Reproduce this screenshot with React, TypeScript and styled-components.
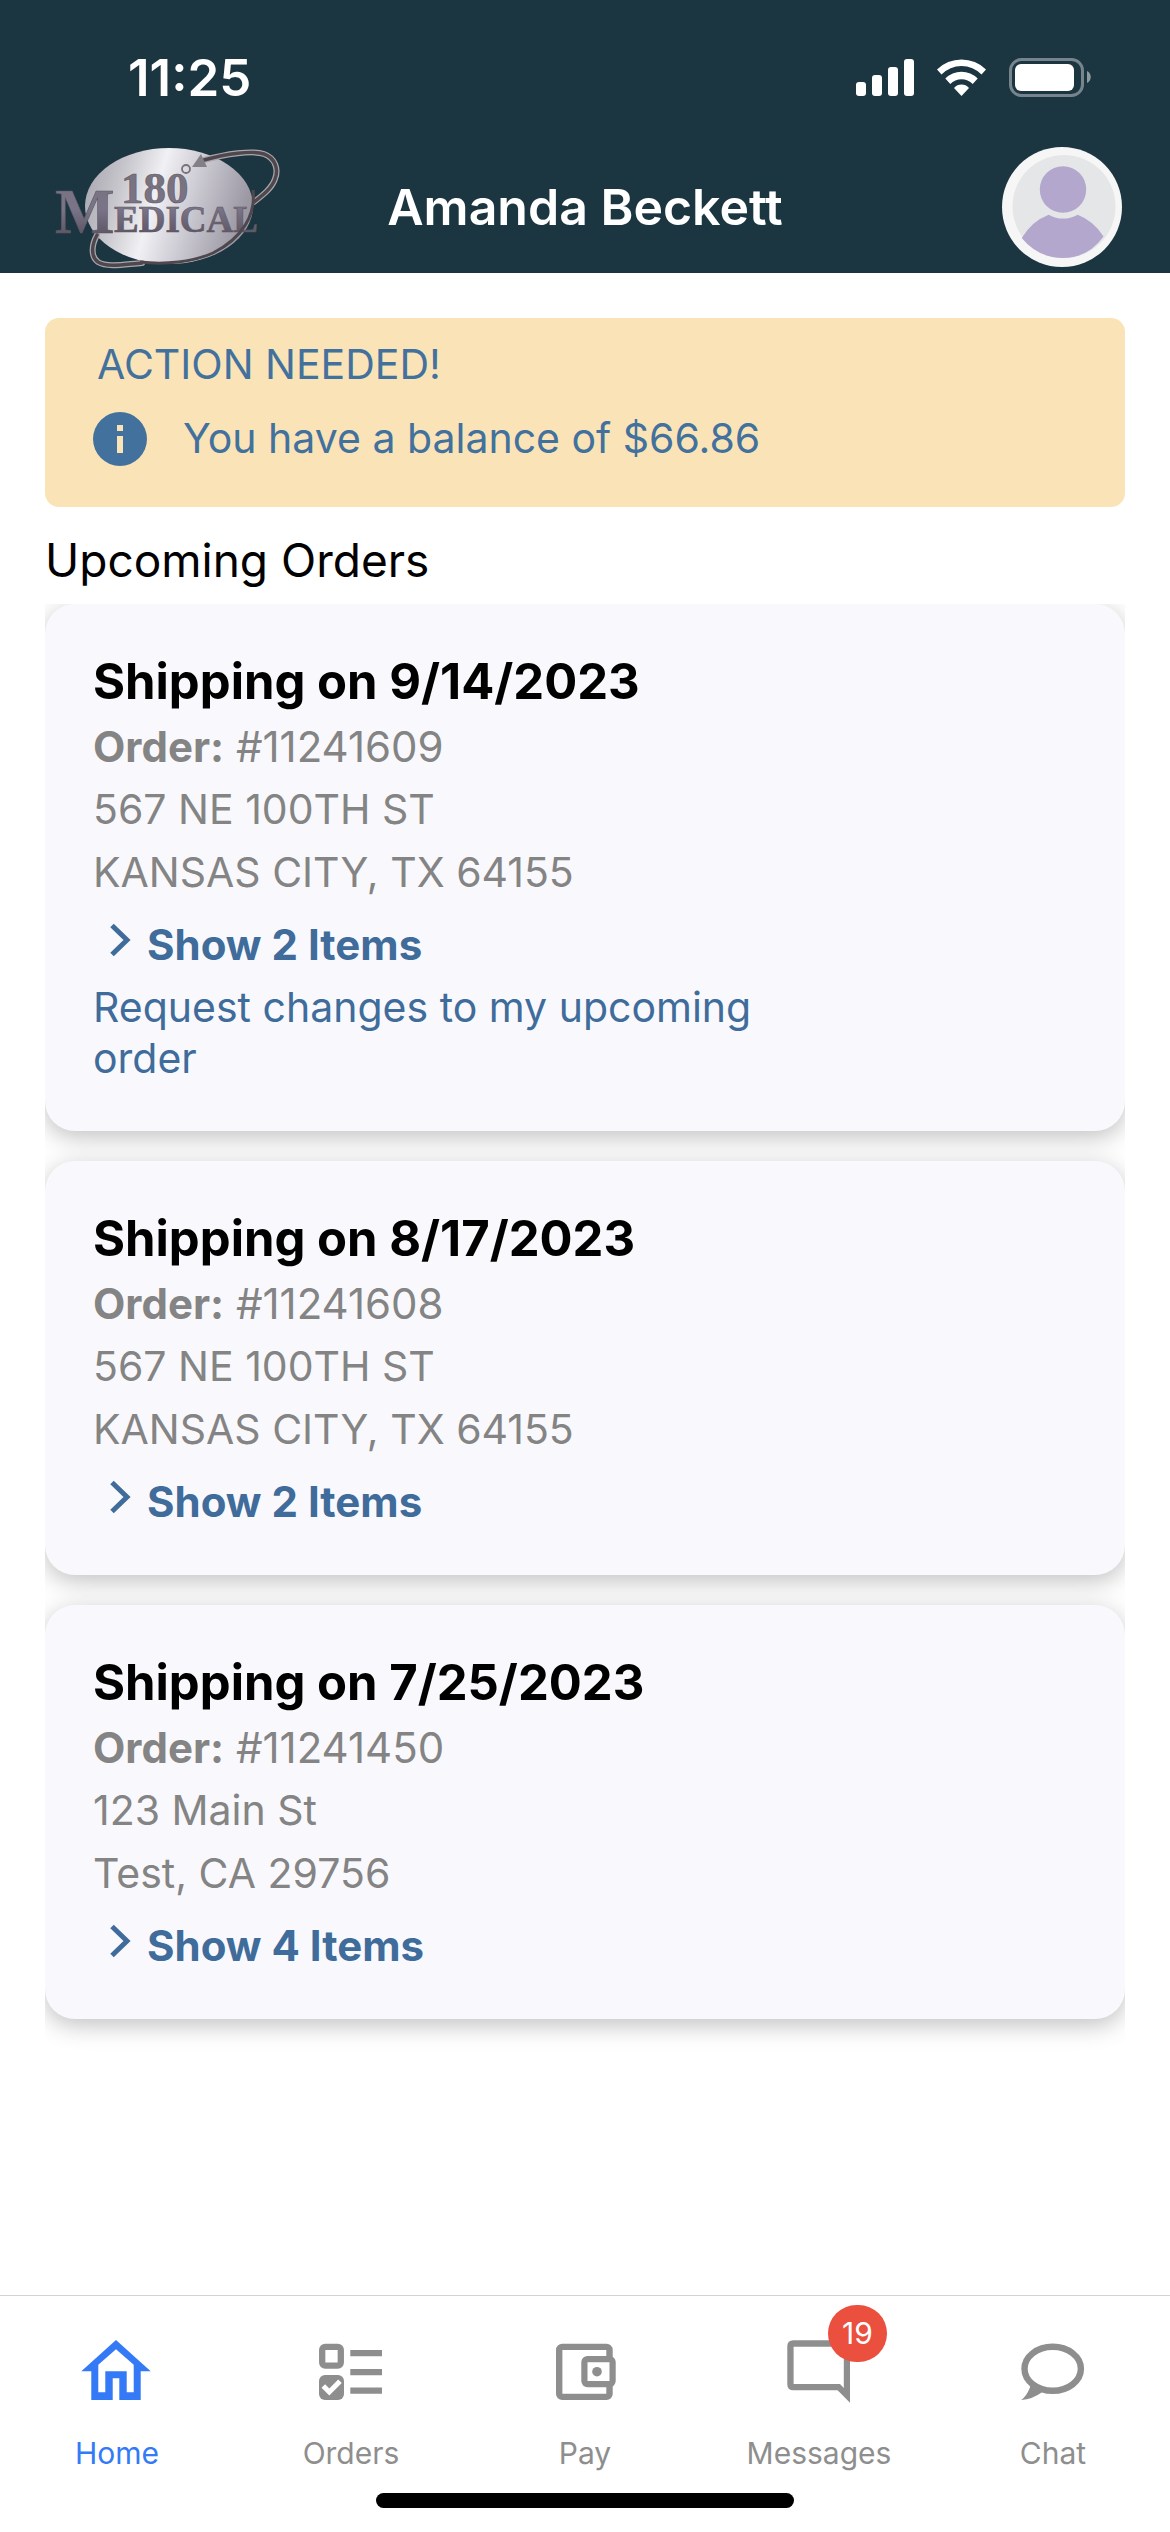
import React from "react";
import styled, { createGlobalStyle } from "styled-components";

const GlobalStyle = createGlobalStyle`
  * { box-sizing: border-box; }
  body { margin: 0; background: #fff; color: #000; font-family: Inter, "Liberation Sans", sans-serif; }
  h1, h2, h3, p { margin: 0; padding: 0; }
  button { border: 0; padding: 0; background: none; font: inherit; color: inherit; text-align: left; cursor: pointer; }
  a { color: inherit; text-decoration: none; }
`;

const Screen = styled.div`
  min-height: 100vh;
  display: flex;
  flex-direction: column;
`;

const Header = styled.header`
  background: #1b3541;
  color: #fff;
`;

const StatusBar = styled.div`
  display: flex;
  align-items: center;
  justify-content: space-between;
  padding: 50px 78px 38px 128px;
`;

const Clock = styled.span`
  font-size: 51px;
  line-height: 56px;
  font-weight: 600;
`;

const StatusIcons = styled.svg`
  width: 238px;
  height: 40px;
`;

const TitleBar = styled.div`
  display: grid;
  grid-template-columns: 1fr auto 1fr;
  align-items: center;
  padding: 0 48px 3px;
`;

const Logo = styled.svg`
  width: 232px;
  height: 126px;
`;

const Name = styled.h1`
  font-size: 50px;
  line-height: 60px;
  font-weight: 600;
`;

const AvatarButton = styled.button`
  justify-self: end;
  display: flex;
`;

const AvatarIcon = styled.svg`
  width: 120px;
  height: 120px;
`;

const Main = styled.main`
  flex: 1;
  padding: 45px 45px 0;
`;

const Alert = styled.section`
  background: #fae4b7;
  color: #43719e;
  border-radius: 14px;
  padding: 19px 48px 37px;
`;

const AlertTitle = styled.h2`
  font-size: 41px;
  line-height: 54px;
  font-weight: 400;
  padding-left: 4px;
`;

const AlertRow = styled.div`
  display: flex;
  align-items: center;
  gap: 36px;
  margin-top: 16px;
  font-size: 41px;
  line-height: 63px;
`;

const InfoIcon = styled.svg`
  width: 54px;
  height: 54px;
`;

const SectionTitle = styled.h2`
  font-size: 46px;
  line-height: 57px;
  font-weight: 400;
  padding: 25px 0 15px;
`;

const Orders = styled.div`
  overflow: hidden;
  display: flex;
  flex-direction: column;
  gap: 30px;
  padding-bottom: 36px;
`;

const Card = styled.article`
  background: #f9f9fd;
  border-radius: 30px;
  box-shadow: 0 6px 24px rgba(0, 0, 0, 0.25);
  padding: 45px 48px 42px;
  color: #848484;
  font-size: 41px;
  line-height: 63px;
`;

const CardTitle = styled.h3`
  color: #000;
  font-size: 49px;
  line-height: 66px;
  font-weight: 700;
`;

const OrderNumber = styled.p`
  font-size: 42px;
`;

const ShowButton = styled.button`
  display: flex;
  gap: 15px;
  margin-top: 9px;
  padding-left: 16px;
  color: #3f6c9a;
  font-size: 42px;
  font-weight: 700;
`;

const ChevronIcon = styled.svg`
  width: 23px;
  height: 54px;
`;

const ChangeLink = styled.a`
  display: block;
  width: 68%;
  padding: 6px 0 5px;
  line-height: 51px;
  color: #3f6c9a;
`;

const Footer = styled.footer`
  border-top: 1px solid #d4d4d4;
`;

const Tabs = styled.nav`
  display: grid;
  grid-template-columns: repeat(5, 1fr);
  padding-top: 38px;
`;

const Tab = styled.button<{ $active?: boolean }>`
  display: flex;
  flex-direction: column;
  align-items: center;
  gap: 29px;
  color: ${(p) => (p.$active ? "#347af7" : "#8e8e8e")};
  font-size: 30px;
  line-height: 36px;
`;

const TabIcon = styled.span`
  position: relative;
  display: flex;
`;

const TabSvg = styled.svg`
  width: 72px;
  height: 72px;
`;

const Badge = styled.span`
  position: absolute;
  left: 45px;
  top: -29px;
  min-width: 59px;
  border-radius: 29px;
  background: #eb4f3d;
  color: #fff;
  text-align: center;
  font-size: 30px;
  line-height: 57px;
`;

const HomeIndicator = styled.div`
  width: 418px;
  height: 15px;
  margin: 22px auto 24px;
  border-radius: 8px;
  background: #000;
`;

type Order = {
  date: string;
  id: string;
  street: string;
  city: string;
  items: number;
  editable?: boolean;
};

const orders: Order[] = [
  { date: "9/14/2023", id: "11241609", street: "567 NE 100TH ST", city: "KANSAS CITY, TX 64155", items: 2, editable: true },
  { date: "8/17/2023", id: "11241608", street: "567 NE 100TH ST", city: "KANSAS CITY, TX 64155", items: 2 },
  { date: "7/25/2023", id: "11241450", street: "123 Main St", city: "Test, CA 29756", items: 4 },
];

const upperOrbit = "M204 160C226 154 252 150 264 154C275 158 279 169 275 179C272 188 263 195 254 202";
const lowerOrbit = "M97 235C91 246 91 257 98 262C108 268 126 264 142 263";

const MedicalLogo = () => (
  <Logo viewBox="48 144 232 126" role="img" aria-label="180 Medical">
    <defs>
      <linearGradient id="disc" x1="0" y1="0.1" x2="1" y2="0.3">
        <stop offset="0" stopColor="#a5a3ac" />
        <stop offset="0.25" stopColor="#c9c8ce" />
        <stop offset="0.46" stopColor="#f1f0f4" />
        <stop offset="0.72" stopColor="#c6c4cd" />
        <stop offset="1" stopColor="#9b98a3" />
      </linearGradient>
      <linearGradient id="metal" x1="0" y1="0" x2="0" y2="1">
        <stop offset="0" stopColor="#77727a" />
        <stop offset="0.55" stopColor="#7a7489" />
        <stop offset="1" stopColor="#4d4753" />
      </linearGradient>
    </defs>
    <ellipse cx="169" cy="206" rx="84" ry="58" fill="url(#disc)" />
    <g fill="none" strokeLinecap="round">
      <path d={upperOrbit} stroke="#aaa6ab" strokeWidth="6" />
      <path d={upperOrbit} stroke="#4e484e" strokeWidth="3.5" />
      <path d={lowerOrbit} stroke="#aaa6ab" strokeWidth="6" />
      <path d={lowerOrbit} stroke="#4e484e" strokeWidth="3.5" />
    </g>
    <path d="M192 167L201 154L207 167Z" fill="#858088" />
    <circle cx="186" cy="169" r="4" fill="none" stroke="#77727a" strokeWidth="1.8" />
    <text fontFamily="Liberation Serif, serif" fontWeight="700" fill="url(#metal)" stroke="#5d5762" strokeWidth="0.6">
      <tspan x="121" y="203" fontSize="45">180</tspan>
      <tspan x="55" y="233" fontSize="63">M</tspan>
      <tspan x="114" y="232" fontSize="37">EDICAL</tspan>
    </text>
    <path d="M253 190C256 214 243 238 213 253C193 262 165 265 140 262" fill="none" stroke="#4e484e" strokeWidth="3" />
  </Logo>
);

const StatusGlyphs = () => (
  <StatusIcons viewBox="854 58 238 40" aria-hidden="true">
    <g fill="#fff">
      <rect x="856" y="82" width="10" height="14" rx="3" />
      <rect x="872" y="75" width="10" height="21" rx="3" />
      <rect x="888" y="67" width="10" height="29" rx="3" />
      <rect x="904" y="59" width="10" height="37" rx="3" />
      <path d="M937 69.5A35 35 0 0 1 986 69.5L981.5 74.5A28 28 0 0 0 941.5 74.5Z" />
      <path d="M945.3 78.5A22.7 22.7 0 0 1 977.7 78.5L972.7 84A15.7 15.7 0 0 0 950.3 84Z" />
      <path d="M954 88A10 10 0 0 1 969 88L961.5 96Z" />
      <rect x="1015" y="64" width="59" height="27" rx="6" />
    </g>
    <rect x="1010.5" y="59.5" width="72" height="36" rx="11" fill="none" stroke="#fff" strokeOpacity="0.4" strokeWidth="3" />
    <path d="M1087 71C1092 73 1092 81 1087 83Z" fill="#fff" fillOpacity="0.5" />
  </StatusIcons>
);

const tabs = [
  {
    label: "Home",
    icon: (
      <path
        fillRule="evenodd"
        d="M35 6L.3 37.3H10.3V66H31.7V44.3H38.3V66H59.7V37.3H69.7ZM17.3 30.7L35 15.3L52.7 30.7V58.3H45.7V37.3H24.3V58.3H17.3Z"
      />
    ),
  },
  {
    label: "Orders",
    icon: (
      <>
        <rect x="7.2" y="12.8" width="18.6" height="18.8" rx="3" fill="none" stroke="currentColor" strokeWidth="6.3" />
        <rect x="4" y="41" width="25" height="25" rx="6" />
        <path d="M8.3 52L14.3 58L25 47.3" fill="none" stroke="#fff" strokeWidth="5" />
        <path d="M35.3 16H67V22.3H35.3ZM35.3 35H67V41.3H35.3ZM35.3 53.5H67V59.8H35.3Z" />
      </>
    ),
  },
  {
    label: "Pay",
    icon: (
      <>
        <rect x="10.2" y="12.9" width="50.3" height="50" rx="3" fill="none" stroke="currentColor" strokeWidth="6.4" />
        <rect x="35.4" y="25.1" width="28.2" height="25" rx="3" fill="#fff" stroke="currentColor" strokeWidth="6.2" />
        <circle cx="48" cy="37.7" r="4.8" />
      </>
    ),
  },
  {
    label: "Messages",
    badge: 19,
    icon: (
      <path
        fillRule="evenodd"
        d="M10.3 6.3H61Q67 6.3 67 12.3V68.7L54.6 56.3H10.3Q4.3 56.3 4.3 50.3V12.3Q4.3 6.3 10.3 6.3ZM10.6 12.7V50H57L60.8 54V12.7Z"
      />
    ),
  },
  {
    label: "Chat",
    icon: (
      <>
        <ellipse cx="35.7" cy="34.8" rx="28.2" ry="22" fill="none" stroke="currentColor" strokeWidth="6.4" />
        <path d="M11 49.5Q14.5 51.5 12.5 54.5Q9.5 62 4.3 66Q15 65.5 25.7 57.7L20 50Z" />
      </>
    ),
  },
];

export default function App() {
  return (
    <Screen>
      <GlobalStyle />
      <Header>
        <StatusBar>
          <Clock>11:25</Clock>
          <StatusGlyphs />
        </StatusBar>
        <TitleBar>
          <MedicalLogo />
          <Name>Amanda Beckett</Name>
          <AvatarButton aria-label="Profile">
            <AvatarIcon viewBox="0 0 120 120" aria-hidden="true">
              <circle cx="60" cy="60" r="60" fill="#f6f6f6" />
              <circle cx="62" cy="59.5" r="51.5" fill="#e4e6e7" />
              <circle cx="61" cy="42.5" r="23.2" fill="#b4a7ce" />
              <path d="M19.7 91Q30 74 46.7 67.7Q61 75.5 75.7 67.7Q92 74 101.5 89.5Q86 111 61 111Q36 111 19.7 91Z" fill="#b4a7ce" />
            </AvatarIcon>
          </AvatarButton>
        </TitleBar>
      </Header>
      <Main>
        <Alert>
          <AlertTitle>ACTION NEEDED!</AlertTitle>
          <AlertRow>
            <InfoIcon viewBox="0 0 54 54" aria-hidden="true">
              <circle cx="27" cy="27" r="27" fill="#43719e" />
              <path d="M24 13H30V19H24ZM24 24H30V41H24Z" fill="#fae4b7" />
            </InfoIcon>
            <p>You have a balance of $66.86</p>
          </AlertRow>
        </Alert>
        <SectionTitle>Upcoming Orders</SectionTitle>
        <Orders>
          {orders.map((order) => (
            <Card key={order.id}>
              <CardTitle>Shipping on {order.date}</CardTitle>
              <OrderNumber>
                <b>Order:</b> #{order.id}
              </OrderNumber>
              <p>{order.street}</p>
              <p>{order.city}</p>
              <ShowButton>
                <ChevronIcon viewBox="0 0 23 54" aria-hidden="true">
                  <path d="M3 12.5L18 27L3 41.5" fill="none" stroke="currentColor" strokeWidth="5" />
                </ChevronIcon>
                Show {order.items} Items
              </ShowButton>
              {order.editable && <ChangeLink href="#changes">Request changes to my upcoming order</ChangeLink>}
            </Card>
          ))}
        </Orders>
      </Main>
      <Footer>
        <Tabs>
          {tabs.map((tab, i) => (
            <Tab key={tab.label} $active={i === 0}>
              <TabIcon>
                <TabSvg viewBox="0 0 72 72" fill="currentColor" aria-hidden="true">
                  {tab.icon}
                </TabSvg>
                {tab.badge && <Badge>{tab.badge}</Badge>}
              </TabIcon>
              {tab.label}
            </Tab>
          ))}
        </Tabs>
        <HomeIndicator />
      </Footer>
    </Screen>
  );
}
